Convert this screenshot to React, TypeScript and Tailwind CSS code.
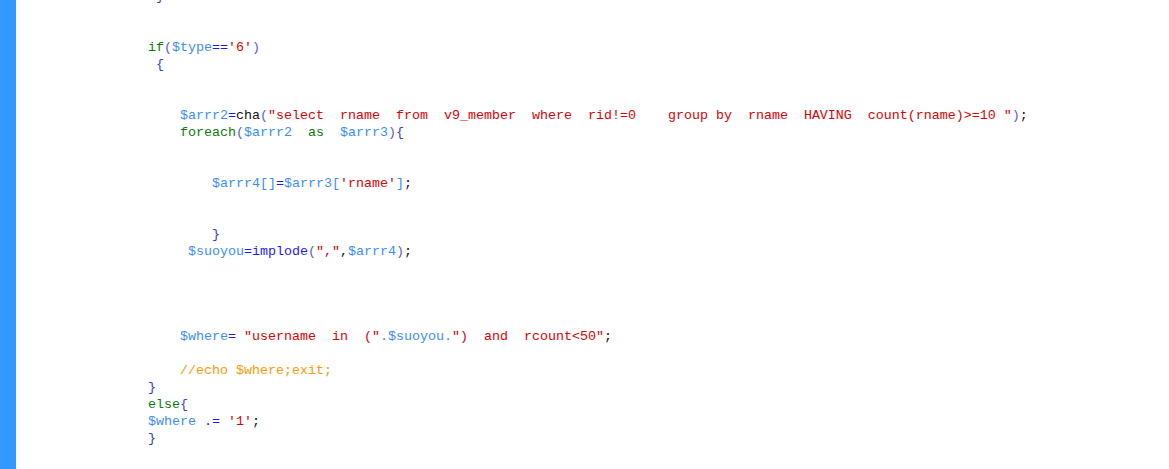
import React from "react";

type Tok = [string, string];

const K = "text-[#0a7a0a]"; // keyword green
const V = "text-[#3a8dff]"; // variable blue
const O = "text-[#1a1aff]"; // operator blue
const P = "text-[#5a5ae6]"; // paren
const S = "text-[#e00000]"; // string red
const C = "text-[#ff9900]"; // comment
const D = "text-[#111111]"; // default
const B = "text-[#3a3ab8]"; // braces

const lines: Tok[][] = [
  [[" ", D], ["}", B]],
  [],
  [],
  [["if", K], ["(", P], ["$type", V], ["==", O], ["'6'", S], [")", P]],
  [[" ", D], ["{", B]],
  [],
  [],
  [
    ["    ", D],
    ["$arrr2", V],
    ["=", O],
    ["cha", D],
    ["(", P],
    ['"select  rname  from  v9_member  where  rid!=0    group by  rname  HAVING  count(rname)>=10 "', S],
    [")", P],
    [";", D],
  ],
  [
    ["    ", D],
    ["foreach", K],
    ["(", P],
    ["$arrr2", V],
    ["  ", D],
    ["as", K],
    ["  ", D],
    ["$arrr3", V],
    [")", P],
    ["{", B],
  ],
  [],
  [],
  [
    ["        ", D],
    ["$arrr4", V],
    ["[]", V],
    ["=", O],
    ["$arrr3", V],
    ["[", V],
    ["'rname'", S],
    ["]", V],
    [";", D],
  ],
  [],
  [],
  [["        ", D], ["}", B]],
  [
    ["     ", D],
    ["$suoyou", V],
    ["=", O],
    ["implode", O],
    ["(", P],
    ['","', S],
    [",", D],
    ["$arrr4", V],
    [")", P],
    [";", D],
  ],
  [],
  [],
  [],
  [],
  [
    ["    ", D],
    ["$where", V],
    ["=", O],
    [' "username  in  ("', S],
    [".$suoyou.", V],
    ['")  and  rcount<50"', S],
    [";", D],
  ],
  [],
  [["    ", D], ["//echo $where;exit;", C]],
  [["}", B]],
  [["else", K], ["{", B]],
  [["$where", V], [" ", D], [".=", O], [" ", D], ["'1'", S], [";", D]],
  [["}", B]],
];

export default function App() {
  return (
    <div className="w-[1169px] h-[469px] overflow-hidden bg-white flex">
      <div className="w-[16px] h-full bg-[#3399ff] shrink-0" />
      <div
        className="flex-1 pl-[132px] -mt-[12px] text-[13.333px] leading-[17px] whitespace-pre"
        style={{ fontFamily: '"Liberation Mono", "Courier New", monospace' }}
      >
        {lines.map((line, i) => (
          <div key={i} className="h-[17px]">
            {line.map(([t, c], j) => (
              <span key={j} className={c}>
                {t}
              </span>
            ))}
          </div>
        ))}
      </div>
    </div>
  );
}
